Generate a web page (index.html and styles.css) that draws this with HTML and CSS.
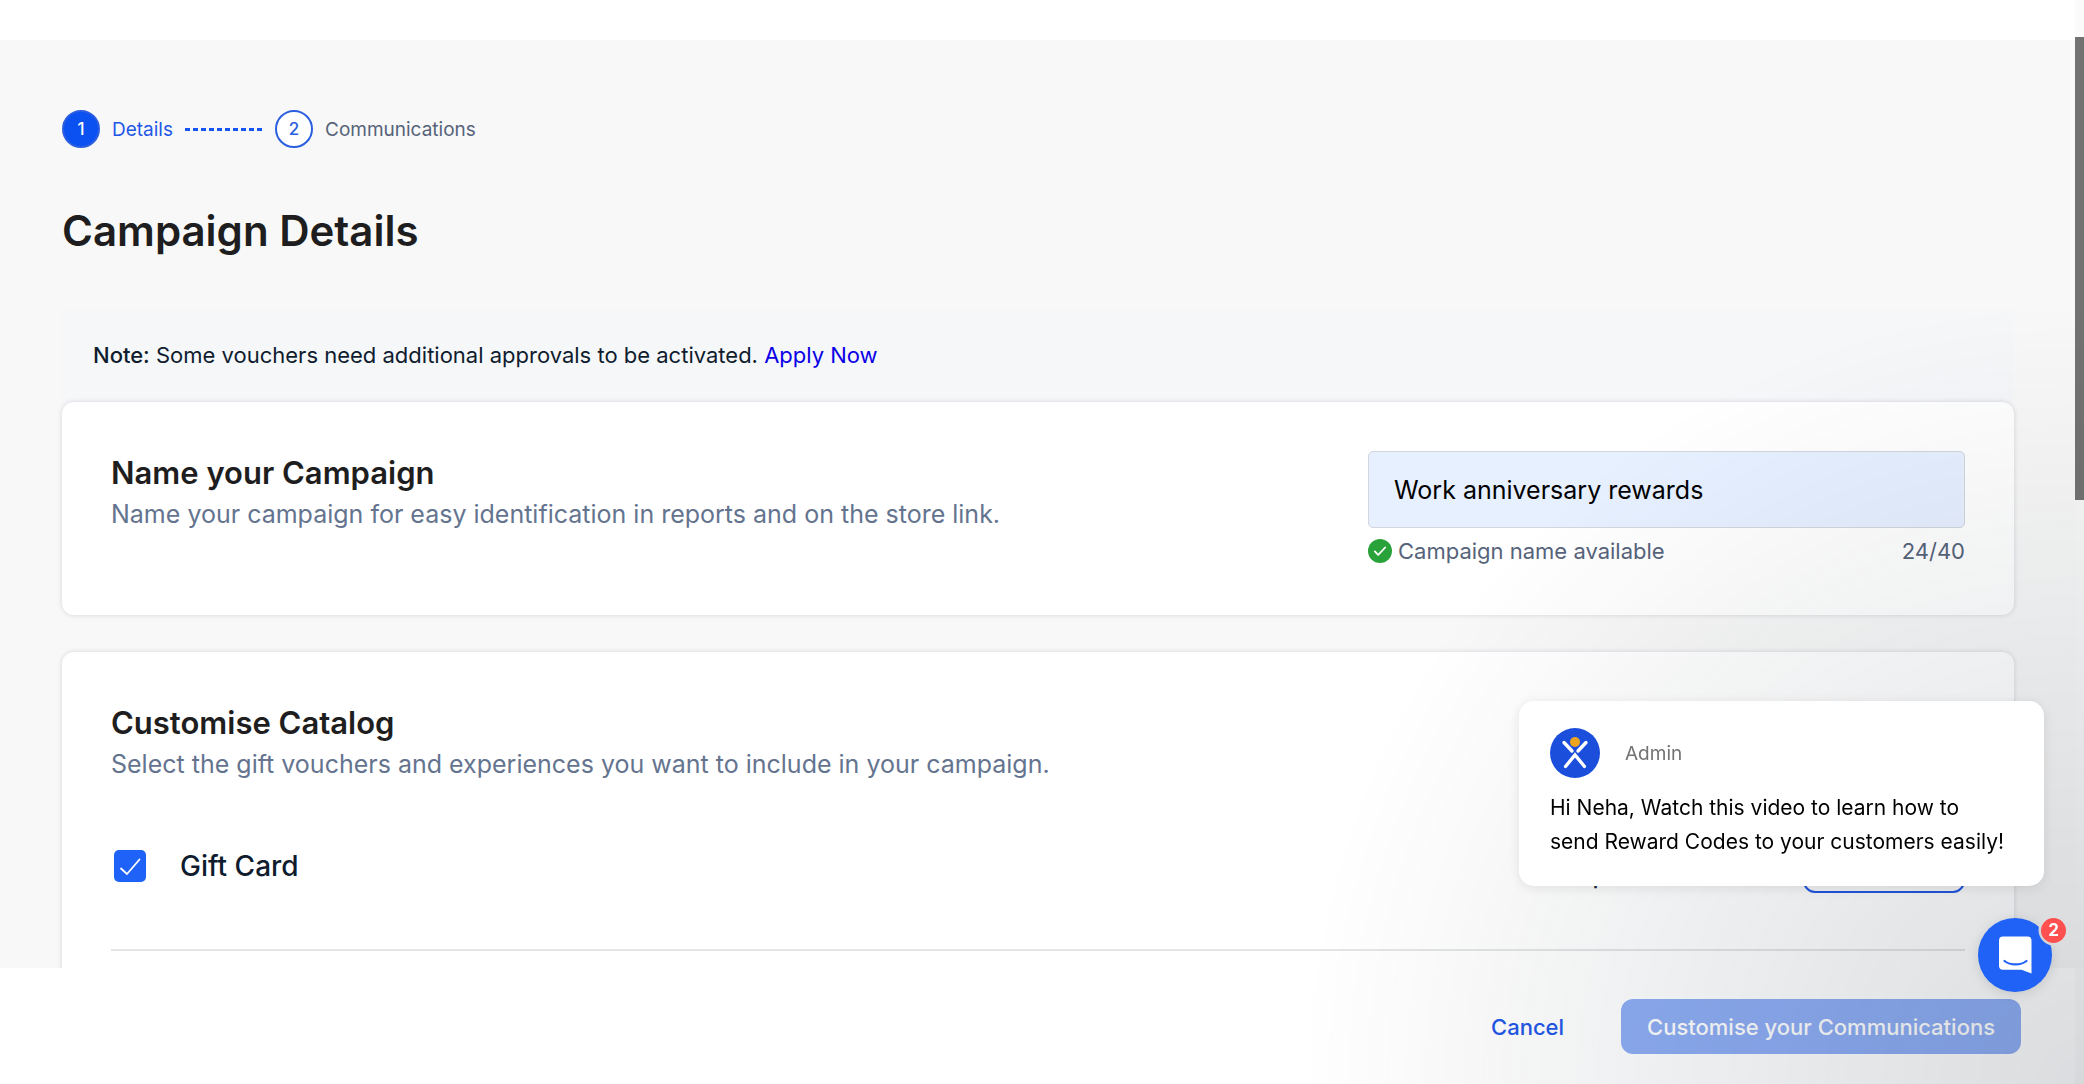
FILE: index.html
```html
<!DOCTYPE html>
<html lang="en">
<head>
<meta charset="utf-8">
<title>Campaign Details</title>
<link rel="stylesheet" href="styles.css">
</head>
<body>
<div class="app">
  <header class="topbar"></header>
  <main class="content">
    <ol class="steps">
      <li class="step step-active"><span class="step-dot">1</span>Details</li>
      <li class="step-line" aria-hidden="true"></li>
      <li class="step"><span class="step-dot">2</span>Communications</li>
    </ol>
    <h1 class="page-title">Campaign Details</h1>
    <p class="note"><strong>Note:</strong> Some vouchers need additional approvals to be activated. <a href="#apply">Apply Now</a></p>

    <section class="card card-name">
      <div class="card-intro">
        <h2>Name your Campaign</h2>
        <label class="lead" for="campaign-name">Name your campaign for easy identification in reports and on the store link.</label>
      </div>
      <div class="field">
        <input class="text-input" id="campaign-name" type="text" maxlength="40" value="Work anniversary rewards">
        <div class="field-help">
          <svg class="ok-icon" viewBox="0 0 24 24" aria-hidden="true"><circle cx="12" cy="12" r="12" fill="#2aa23a"/><path d="M6.8 12.4l3.4 3.5 7-7.4" fill="none" stroke="#fff" stroke-width="1.8" stroke-linecap="round" stroke-linejoin="round"/></svg>
          <span>Campaign name available</span>
          <span class="counter">24/40</span>
        </div>
      </div>
    </section>

    <section class="card card-catalog">
      <div class="card-intro">
        <h2>Customise Catalog</h2>
        <p class="lead">Select the gift vouchers and experiences you want to include in your campaign.</p>
      </div>
      <div class="catalog-row">
        <label class="check"><input type="checkbox" checked><span>Gift Card</span></label>
        <span class="selected-count">All options</span>
        <button class="btn-outline" type="button">Customise</button>
      </div>
    </section>
  </main>
  <footer class="actions">
    <button class="btn-text" type="button">Cancel</button>
    <button class="btn-primary" type="button" disabled>Customise your Communications</button>
  </footer>
</div>

<div class="scrollbar" aria-hidden="true"><div class="scroll-thumb"></div></div>
<div class="chat-shade" aria-hidden="true"></div>

<aside class="chat-card">
  <div class="chat-head">
    <svg class="avatar" viewBox="0 0 50 50" aria-hidden="true">
      <circle cx="25" cy="25" r="25" fill="#1b4edb"/>
      <circle cx="25" cy="14" r="5" fill="#eda41f"/>
      <path d="M14 14.500l8 8.500M36 14.500l-8 8.500M15.500 38.500l9.500-11.500 9.500 11.500" fill="none" stroke="#fff" stroke-width="3.400" stroke-linecap="round" stroke-linejoin="miter"/>
    </svg>
    <span class="sender">Admin</span>
  </div>
  <p class="message">Hi Neha, Watch this video to learn how to send Reward Codes to your customers easily!</p>
</aside>

<button class="launcher" type="button" aria-label="Open chat">
  <svg viewBox="0 0 74 74" aria-hidden="true">
    <defs><mask id="badge-gap"><rect width="74" height="74" fill="#fff"/><circle cx="76" cy="12" r="15.500" fill="#000"/></mask></defs>
    <circle cx="37" cy="37" r="37" fill="#1f62f5" mask="url(#badge-gap)"/>
    <path d="M25 18.500h24.500a4 4 0 0 1 4 4V55.500l-10-3.700H25a4 4 0 0 1-4-4V22.500a4 4 0 0 1 4-4z" fill="#fff"/>
    <path d="M26.500 43c6 4.600 16 4.600 22 0" fill="none" stroke="#1f62f5" stroke-width="2.200" stroke-linecap="round"/>
  </svg>
  <span class="badge">2</span>
</button>
</body>
</html>
```
FILE: styles.css
```css
* { box-sizing: border-box; }

body {
  margin: 0;
  font-family: Inter, "Liberation Sans", sans-serif;
  color: #0f1c2e;
  background: #fff;
}

h1, h2, p, ol { margin: 0; padding: 0; }
button, input { font: inherit; }

.app {
  display: flex;
  flex-direction: column;
  height: 100vh;
}

.topbar { flex: none; height: 40px; }

.content {
  flex: 1;
  min-height: 0;
  overflow: hidden;
  padding: 70px 70px 0 62px;
  background: #f8f8f8;
}

.steps {
  display: flex;
  align-items: center;
  gap: 12px;
  list-style: none;
  font-size: 19px;
}
.step {
  display: flex;
  align-items: center;
  gap: 12px;
  color: #56637a;
}
.step-active { color: #2257e7; }
.step-dot {
  display: grid;
  place-items: center;
  width: 38px;
  height: 38px;
  border: 2px solid #2c5fe0;
  border-radius: 50%;
  background: #fff;
  color: #2c5fe0;
  font-size: 17px;
  font-weight: 500;
}
.step-active .step-dot { background: #0b50f0; color: #fff; }
.step-line {
  width: 78px;
  height: 3px;
  background: repeating-linear-gradient(90deg, #1654f2 0 5px, transparent 5px 8px);
}

.page-title {
  margin-top: 55px;
  font-size: 42px;
  line-height: 56px;
  font-weight: 600;
  color: #1e1e20;
}

.note {
  margin-top: 50px;
  padding: 30px 31px;
  background: #f5f7f9;
  font-size: 22px;
  line-height: 33px;
}
.note strong { font-weight: 500; }
.note a { color: #0a00e6; text-decoration: none; }

.card {
  padding: 49px;
  border-radius: 12px;
  background: #fff;
  box-shadow: 0 0 5px rgba(30, 30, 90, .16);
}
.card-name {
  display: flex;
  justify-content: space-between;
  gap: 48px;
}
.card-catalog { margin-top: 37px; }

.card h2 {
  font-size: 31px;
  line-height: 44px;
  font-weight: 600;
  color: #1e1e20;
}
.lead {
  display: block;
  font-size: 25px;
  line-height: 38px;
  color: #64748f;
}

.field { width: 597px; }
.text-input {
  display: block;
  width: 100%;
  height: 77px;
  padding: 0 25px;
  border: 1px solid #d3d7dd;
  border-radius: 5px;
  background: #e7f0ff;
  color: #000;
  font-size: 25px;
}
.field-help {
  display: flex;
  align-items: center;
  gap: 6px;
  margin-top: 8px;
  font-size: 22px;
  line-height: 30px;
  color: #56637a;
}
.ok-icon { width: 24px; height: 24px; }
.counter { margin-left: auto; }

.catalog-row {
  display: flex;
  align-items: center;
  margin-top: 56px;
  padding-bottom: 56px;
  border-bottom: 2px solid #e4e5e6;
}
.check {
  display: flex;
  align-items: center;
  gap: 34px;
  margin-right: auto;
  padding-left: 3px;
  font-size: 28px;
  font-weight: 500;
}
.check input {
  appearance: none;
  width: 32px;
  height: 32px;
  margin: 0;
  border-radius: 5px;
  background: #1f62f8 url("data:image/svg+xml,%3Csvg xmlns='http://www.w3.org/2000/svg' viewBox='0 0 32 32'%3E%3Cpath d='M7 18.500l6 5.500L25.500 9.500' fill='none' stroke='%23fff' stroke-width='1.800' stroke-linecap='round' stroke-linejoin='round'/%3E%3C/svg%3E");
}
.selected-count {
  width: 256px;
  padding-top: 20px;
  font-size: 22px;
  font-weight: 500;
}
.btn-outline {
  width: 162px;
  height: 54px;
  border: 2px solid #2257e7;
  border-radius: 12px;
  background: transparent;
  color: #2257e7;
  font-size: 22px;
  font-weight: 500;
}

.actions {
  display: flex;
  flex: none;
  align-items: center;
  justify-content: flex-end;
  gap: 31px;
  padding: 31px 63px 30px 0;
  background: #fff;
}
.btn-text, .btn-primary {
  height: 55px;
  padding: 0 26px;
  border: 0;
  border-radius: 12px;
  font-size: 22px;
  font-weight: 500;
}
.btn-text { background: none; color: #2257e7; }
.btn-primary { background: #8eaef5; color: #fff; }

.scrollbar {
  position: fixed;
  top: 0;
  right: 0;
  bottom: 0;
  width: 9px;
  padding-top: 37px;
  background: rgba(250, 250, 250, .7);
}
.scroll-thumb {
  height: 463px;
  background: #727272;
}

/* Soft shade behind the chat widget */
.chat-shade {
  position: fixed;
  right: 0;
  bottom: 0;
  width: 770px;
  height: 770px;
  background: radial-gradient(ellipse at bottom right, rgba(29, 39, 54, .16) 0%, rgba(29, 39, 54, 0) 72%);
  pointer-events: none;
}

.chat-card {
  position: fixed;
  right: 40px;
  bottom: 198px;
  width: 525px;
  padding: 27px 31px;
  border-radius: 15px;
  background: #fff;
  box-shadow: 0 2px 12px rgba(0, 0, 0, .09);
}
.chat-head {
  display: flex;
  align-items: center;
  gap: 25px;
}
.avatar { width: 50px; height: 50px; }
.sender { font-size: 19px; color: #737373; }
.message {
  margin-top: 13px;
  font-size: 21px;
  line-height: 34px;
  color: #000;
}

.launcher {
  position: fixed;
  right: 32px;
  bottom: 92px;
  width: 74px;
  height: 74px;
  padding: 0;
  border: 0;
  border-radius: 50%;
  background: none;
}
.launcher svg { display: block; filter: drop-shadow(0 2px 6px rgba(0, 0, 0, .12)); }
.badge {
  position: absolute;
  top: 0;
  right: -14px;
  width: 25px;
  height: 25px;
  border-radius: 50%;
  background: #ff4f4f;
  color: #fff;
  font-size: 17px;
  line-height: 25px;
  font-weight: 700;
  text-align: center;
}
```
